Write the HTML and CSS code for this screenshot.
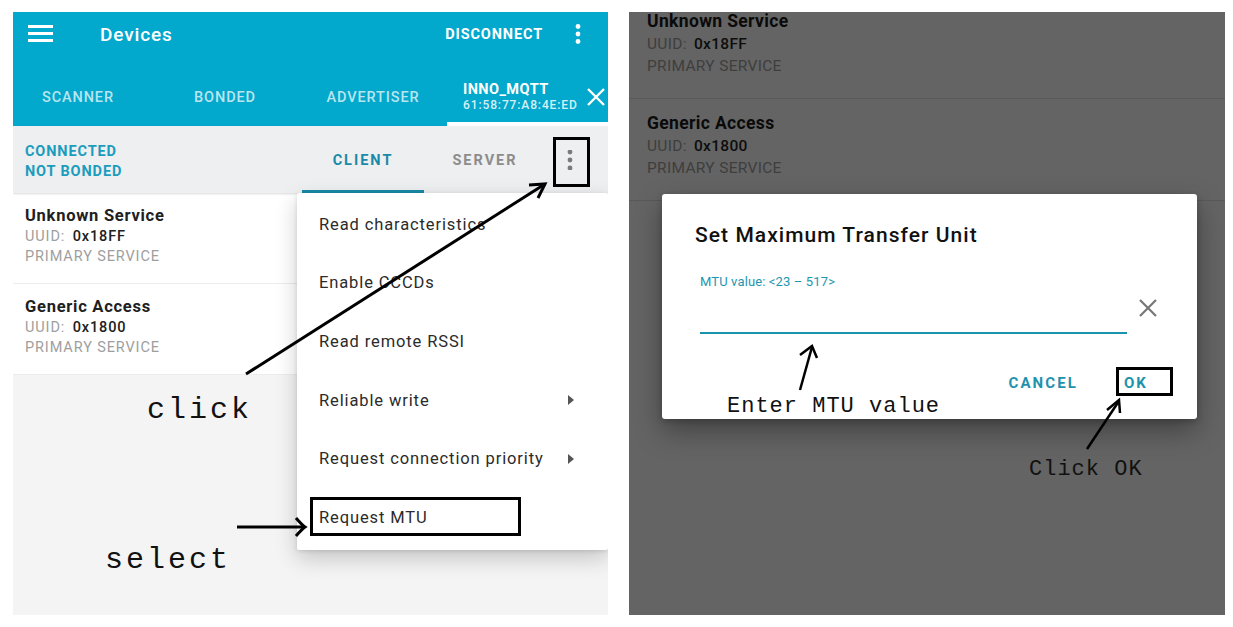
FILE: index.html
```html
<!DOCTYPE html>
<html lang="en">
<head>
<meta charset="utf-8">
<title>Request MTU</title>
<link rel="stylesheet" href="styles.css">
</head>
<body>
<div class="page">
  <section class="phone phone-left">
    <header class="appbar">
      <div class="toolbar">
        <svg class="hamburger" width="25" height="18" viewBox="0 0 25 18"><rect x="0" y="0" width="25" height="3" fill="#fff"/><rect x="0" y="7" width="25" height="3" fill="#fff"/><rect x="0" y="14" width="25" height="3" fill="#fff"/></svg>
        <h1 class="title">Devices</h1>
        <span class="action">DISCONNECT</span>
        <svg class="kebab-white" width="6" height="20" viewBox="0 0 6 20"><circle cx="3" cy="2.5" r="2.4" fill="#fff"/><circle cx="3" cy="10" r="2.4" fill="#fff"/><circle cx="3" cy="17.5" r="2.4" fill="#fff"/></svg>
      </div>
      <nav class="tabs">
        <span class="tab">SCANNER</span>
        <span class="tab">BONDED</span>
        <span class="tab tab-adv">ADVERTISER</span>
        <span class="tab tab-device">
          <span class="device">
            <span class="device-name">INNO_MQTT</span>
            <span class="device-mac">61:58:77:A8:4E:ED</span>
          </span>
          <svg class="close-white" width="20" height="18" viewBox="0 0 20 18"><path d="M2 1 L18 17 M18 1 L2 17" stroke="#fff" stroke-width="2.4" fill="none"/></svg>
        </span>
      </nav>
    </header>
    <div class="subbar">
      <div class="status"><span>CONNECTED</span><span>NOT BONDED</span></div>
      <span class="subtab subtab-active">CLIENT</span>
      <span class="subtab">SERVER</span>
      <span class="subkebab"><svg width="6" height="20" viewBox="0 0 6 20"><circle cx="3" cy="2" r="2.4" fill="#7a7a7a"/><circle cx="3" cy="10" r="2.4" fill="#7a7a7a"/><circle cx="3" cy="18" r="2.4" fill="#7a7a7a"/></svg></span>
    </div>
    <ul class="services">
      <li class="service">
        <span class="svc-name">Unknown Service</span>
        <span class="svc-line"><span class="lbl">UUID:</span> <b>0x18FF</b></span>
        <span class="svc-type">PRIMARY SERVICE</span>
      </li>
      <li class="service">
        <span class="svc-name">Generic Access</span>
        <span class="svc-line"><span class="lbl">UUID:</span> <b>0x1800</b></span>
        <span class="svc-type">PRIMARY SERVICE</span>
      </li>
    </ul>
    <div class="menu">
      <div class="menu-item">Read characteristics</div>
      <div class="menu-item">Enable CCCDs</div>
      <div class="menu-item">Read remote RSSI</div>
      <div class="menu-item">Reliable write<span class="sub-arrow"></span></div>
      <div class="menu-item">Request connection priority<span class="sub-arrow"></span></div>
      <div class="menu-item">Request MTU</div>
    </div>
    <svg class="annot" width="595" height="603" viewBox="0 0 595 603">
      <rect x="541.5" y="126.5" width="34" height="47" fill="none" stroke="#000" stroke-width="3"/>
      <rect x="298.5" y="486.5" width="208" height="36" fill="none" stroke="#000" stroke-width="3"/>
      <path d="M233 362 L532 172" stroke="#000" stroke-width="3" fill="none"/>
      <path d="M516 173 L532 172 L525 186" stroke="#000" stroke-width="3" fill="none" stroke-linejoin="miter"/>
      <path d="M224 515 L291 515" stroke="#000" stroke-width="3" fill="none"/>
      <path d="M283 506 Q289 513 292 515 Q289 517 283 524" stroke="#000" stroke-width="3" fill="none"/>
      <text class="note" x="134" y="406">click</text>
      <text class="note" x="92" y="556">select</text>
    </svg>
  </section>

  <section class="phone phone-right">
    <ul class="services services-dim">
      <li class="service">
        <span class="svc-name">Unknown Service</span>
        <span class="svc-line"><span class="lbl">UUID:</span> <b>0x18FF</b></span>
        <span class="svc-type">PRIMARY SERVICE</span>
      </li>
      <li class="service">
        <span class="svc-name">Generic Access</span>
        <span class="svc-line"><span class="lbl">UUID:</span> <b>0x1800</b></span>
        <span class="svc-type">PRIMARY SERVICE</span>
      </li>
    </ul>
    <div class="dialog">
      <h2 class="dialog-title">Set Maximum Transfer Unit</h2>
      <label class="field-label">MTU value: &lt;23 – 517&gt;</label>
      <div class="field-row">
        <span class="field"></span>
        <svg class="clear" width="20" height="20" viewBox="0 0 20 20"><path d="M2 2 L18 18 M18 2 L2 18" stroke="#767676" stroke-width="2.2" fill="none"/></svg>
      </div>
      <div class="dialog-actions">
        <span class="btn">CANCEL</span>
        <span class="btn">OK</span>
      </div>
    </div>
    <svg class="annot" width="596" height="603" viewBox="0 0 596 603">
      <rect x="488.5" y="356.5" width="54" height="26" fill="none" stroke="#000" stroke-width="3"/>
      <path d="M171 378 L183 335" stroke="#000" stroke-width="2.5" fill="none"/>
      <path d="M171 343 L183 334 L188 346" stroke="#000" stroke-width="2.5" fill="none"/>
      <path d="M458 437 L490 389" stroke="#000" stroke-width="2.5" fill="none"/>
      <path d="M478 398 L490 388 L491 401" stroke="#000" stroke-width="2.5" fill="none"/>
      <text class="note note-small" x="98" y="400">Enter MTU value</text>
      <text class="note note-small" x="400" y="463">Click OK</text>
    </svg>
  </section>
</div>
</body>
</html>
```

FILE: styles.css
```css
* { box-sizing: border-box; }
html, body { margin: 0; padding: 0; background: #fff; }
body { font-family: Roboto, "Noto Sans", Arial, sans-serif; }

.page {
  display: flex;
  gap: 21px;
  padding: 12px 0 0 13px;
}

.phone {
  position: relative;
  overflow: hidden;
  height: 603px;
  letter-spacing: 0.055em;
}
.phone-left { width: 595px; background: #f4f4f4; }
.phone-right { width: 596px; background: #646464; }

/* ---------- app bar ---------- */
.appbar { background: #03a8cd; color: #fff; }
.toolbar {
  height: 44px;
  display: flex;
  align-items: center;
  padding: 0 27px 0 15px;
}
.hamburger { display: block; }
.title {
  margin: 0 0 0 47px;
  font-size: 19px;
  font-weight: 500;
  flex: 1;
}
.action {
  font-size: 14.5px;
  font-weight: 700;
  margin-right: 32px;
}
.kebab-white { display: block; }

.tabs {
  height: 70px;
  padding-top: 12px;
  display: grid;
  grid-template-columns: 130px 164px 140px 1fr;
}
.tab {
  display: flex;
  align-items: center;
  justify-content: center;
  font-size: 14.5px;
  font-weight: 500;
  color: rgba(255, 255, 255, 0.72);
}
.tab-adv { padding-right: 8px; }
.tab-device {
  justify-content: space-between;
  padding: 4px 2px 0 16px;
  border-bottom: 4px solid #fff;
}
.device { display: flex; flex-direction: column; }
.device-name { color: #fff; font-weight: 700; font-size: 14.5px; line-height: 16px; letter-spacing: 0.03em; }
.device-mac { color: rgba(255, 255, 255, 0.85); font-size: 12px; line-height: 14px; }
.close-white { display: block; }

/* ---------- sub bar ---------- */
.subbar {
  height: 67px;
  background: #eeeff1;
  display: grid;
  grid-template-columns: 289px 122px 122px 48px 1fr;
  align-items: center;
  box-shadow: 0 1px 2px rgba(0, 0, 0, 0.15);
  position: relative;
}
.status {
  display: flex;
  flex-direction: column;
  padding: 5px 0 0 12px;
  color: #1b9cbd;
  font-weight: 700;
  font-size: 14.5px;
  line-height: 20px;
}
.subtab {
  height: 100%;
  display: flex;
  align-items: center;
  justify-content: center;
  font-size: 14.5px;
  font-weight: 700;
  letter-spacing: 2px;
  color: #8c8c8c;
  padding-top: 1px;
}
.subtab-active {
  color: #1a8aa8;
  border-bottom: 3px solid #1a8aa8;
  padding-top: 4px;
}
.subkebab { display: flex; justify-content: center; }
.subkebab svg { display: block; }

/* ---------- services list ---------- */
.services {
  list-style: none;
  margin: 0;
  padding: 0;
  background: #fff;
}
.service {
  height: 91px;
  border-bottom: 1px solid #ececec;
  padding: 12px 12px 0;
  display: flex;
  flex-direction: column;
}
.svc-name { font-size: 16.5px; font-weight: 700; color: #202020; line-height: 22px; letter-spacing: 0.045em; }
.svc-line { font-size: 14.5px; line-height: 20px; color: #202020; }
.svc-line b { font-weight: 500; margin-left: 3px; }
.lbl, .svc-type { color: #9e9e9e; }
.svc-type { font-size: 14.5px; line-height: 20px; }

.services-dim {
  background: transparent;
  margin-top: -15px;
}
.services-dim .service {
  height: 102px;
  border-bottom: 1px solid #595959;
  padding: 12px 18px 0;
}
.services-dim .svc-name { font-size: 17.5px; line-height: 24px; color: #0a0a0a; letter-spacing: 0.02em; }
.services-dim .svc-line { font-size: 15.5px; line-height: 22px; color: #0d0d0d; letter-spacing: 0.02em; }
.services-dim .lbl, .services-dim .svc-type { color: #3e3e3e; }
.services-dim .svc-type { font-size: 15.5px; line-height: 22px; letter-spacing: 0.02em; }

/* ---------- popup menu ---------- */
.menu {
  position: absolute;
  left: 284px;
  top: 181px;
  right: 0;
  background: #fff;
  padding: 2px 0 3px;
  box-shadow: 0 8px 22px rgba(0, 0, 0, 0.2), 0 1px 4px rgba(0, 0, 0, 0.12);
  border-radius: 2px;
}
.menu-item {
  height: 58.6px;
  display: flex;
  align-items: center;
  justify-content: space-between;
  padding: 0 34px 0 22px;
  font-size: 16.5px;
  color: #2b2b2b;
}
.sub-arrow {
  width: 0;
  height: 0;
  border-left: 6px solid #555;
  border-top: 5px solid transparent;
  border-bottom: 5px solid transparent;
}

/* ---------- dialog ---------- */
.dialog {
  position: absolute;
  left: 33px;
  top: 182px;
  width: 535px;
  height: 225px;
  background: #fff;
  border-radius: 3px;
  padding: 27px 33px 0;
  box-shadow: 0 12px 28px rgba(0, 0, 0, 0.35), 0 2px 6px rgba(0, 0, 0, 0.2);
}
.dialog-title {
  margin: 0;
  font-size: 21px;
  font-weight: 500;
  line-height: 28px;
  color: #111;
  letter-spacing: 0.05em;
}
.field-label {
  display: block;
  margin: 25px 0 0 5px;
  font-size: 13px;
  line-height: 16px;
  color: #1e96b0;
  letter-spacing: 0.01em;
}
.field-row {
  display: flex;
  align-items: flex-end;
  margin-left: 5px;
  height: 44px;
}
.field {
  width: 427px;
  border-bottom: 2px solid #1a93ad;
  height: 44px;
}
.clear { display: block; margin: 0 0 16px 11px; }
.dialog-actions {
  display: flex;
  justify-content: flex-end;
  gap: 14px;
  margin-top: 35px;
}
.btn {
  height: 28px;
  line-height: 28px;
  padding: 0 16px;
  font-size: 15px;
  font-weight: 700;
  letter-spacing: 2.1px;
  color: #1f92ae;
}

/* ---------- annotations ---------- */
.annot {
  position: absolute;
  left: 0;
  top: 0;
  pointer-events: none;
}
.note {
  font-family: "Liberation Mono", "Courier New", monospace;
  font-size: 30px;
  letter-spacing: 3px;
  fill: #111;
}
.note-small {
  font-size: 22px;
  letter-spacing: 1px;
}
```
